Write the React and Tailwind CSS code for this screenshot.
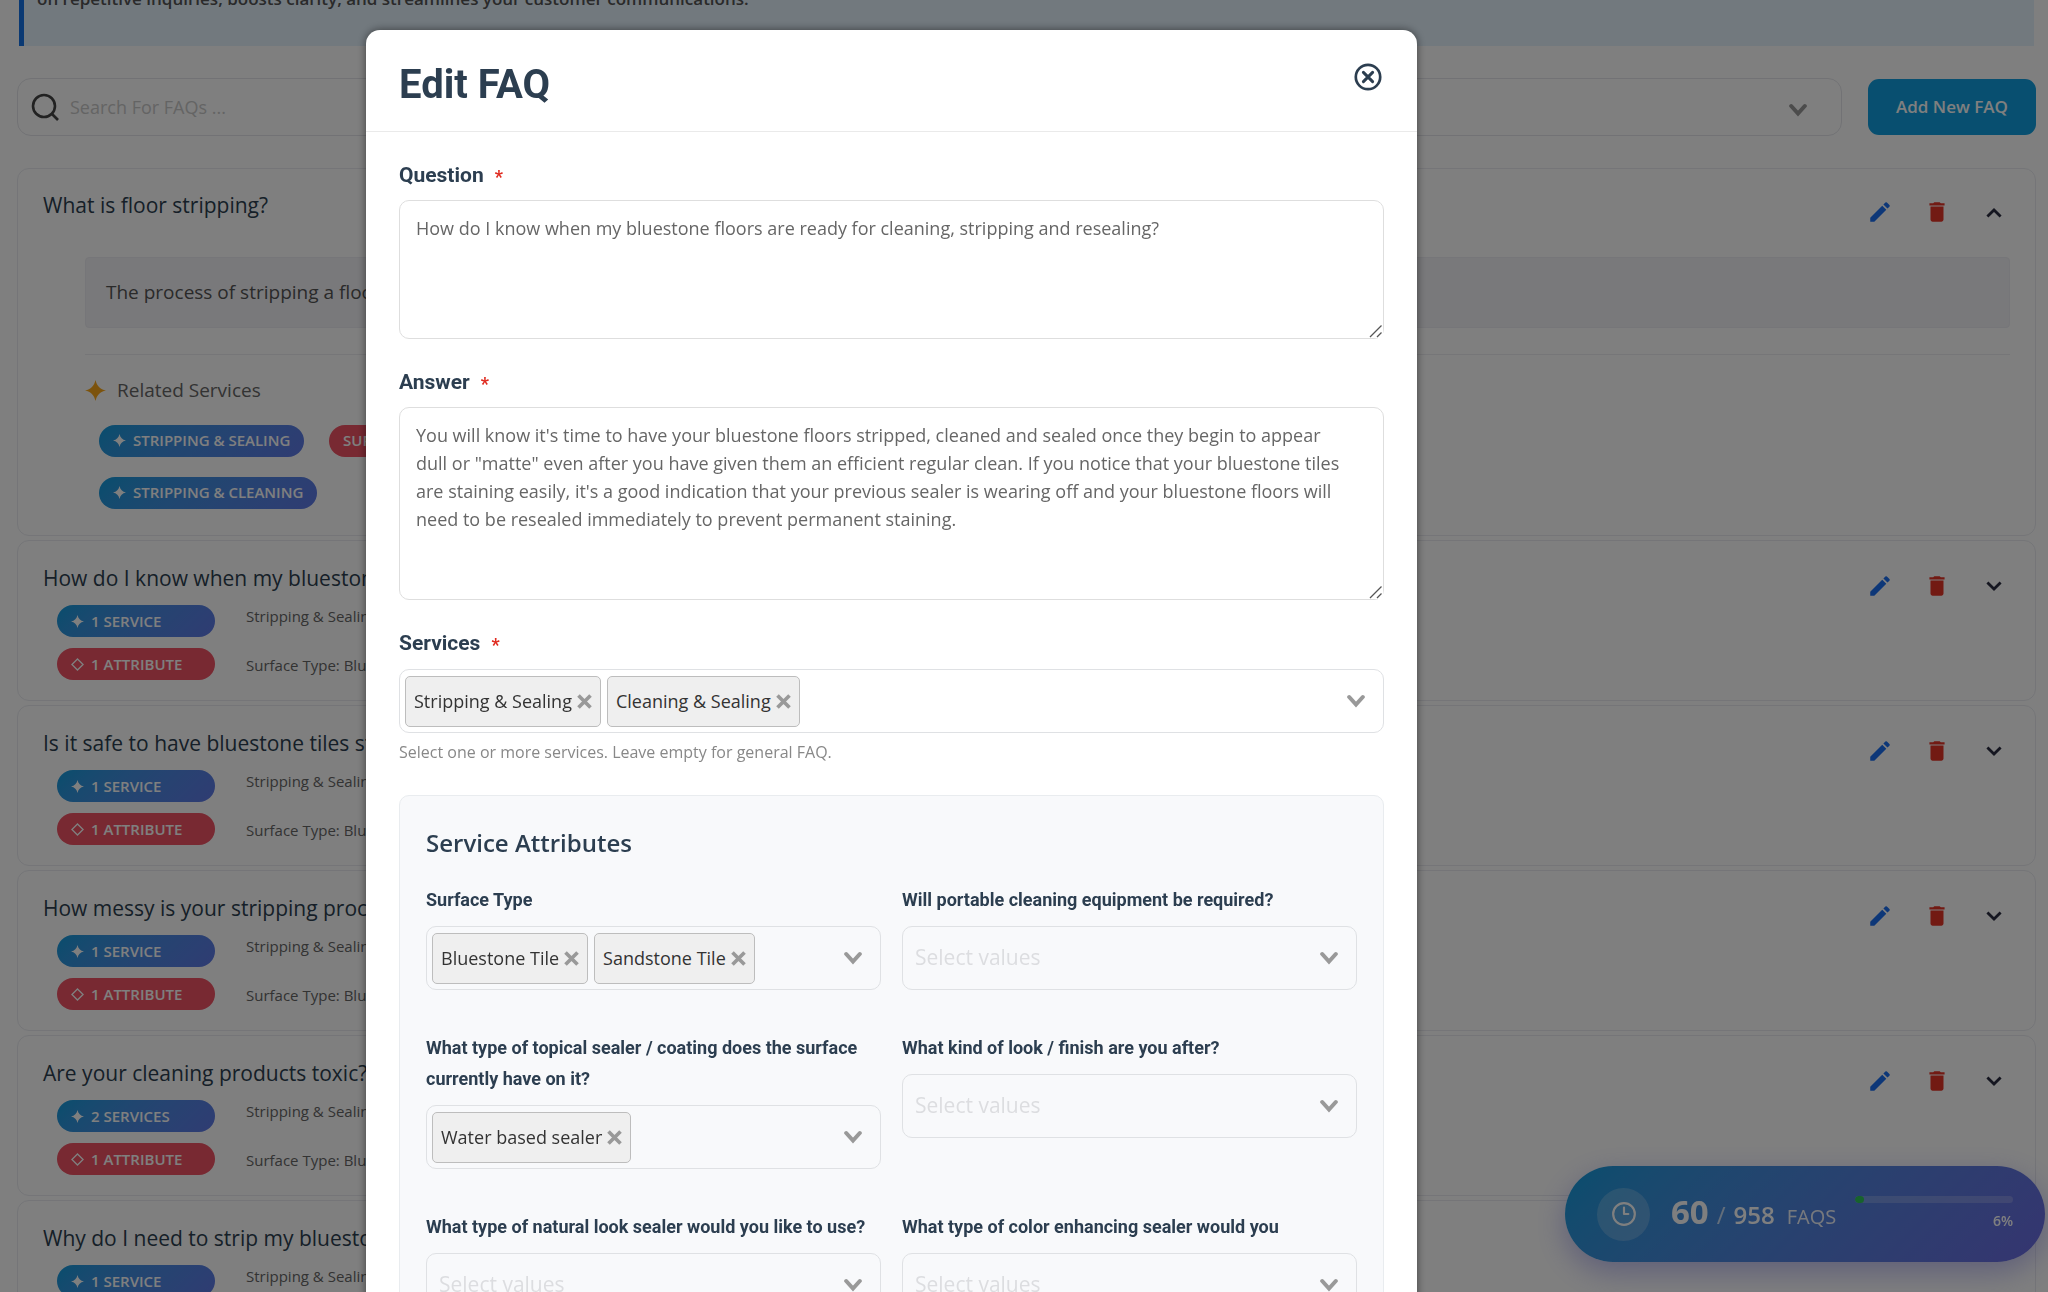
import React, { useState } from "react";
import { Clock3 } from "lucide-react";
import { MdEdit, MdDelete } from "react-icons/md";

const FAQS = [
  { question: "How do I know when my bluestone floors are ready?", services: "1 Service" },
  { question: "Is it safe to have bluestone tiles stripped and resealed?", services: "1 Service" },
  { question: "How messy is your stripping process?", services: "1 Service" },
  { question: "Are your cleaning products toxic?", services: "2 Services" },
  { question: "Why do I need to strip my bluestone floors?", services: "1 Service" },
];

const ATTRIBUTES = [
  { label: "Surface Type", values: ["Bluestone Tile", "Sandstone Tile"] },
  { label: "Will portable cleaning equipment be required?", values: [] },
  {
    label: "What type of topical sealer / coating does the surface currently have on it?",
    values: ["Water based sealer"],
  },
  { label: "What kind of look / finish are you after?", values: [] },
  { label: "What type of natural look sealer would you like to use?", values: [] },
  { label: "What type of color enhancing sealer would you", values: [] },
];

function Sparkle({ className }) {
  return (
    <svg viewBox="0 0 20 20" className={className} fill="currentColor" aria-hidden="true">
      <path d="M10 0 C11.2 5.6 14.4 8.8 20 10 C14.4 11.2 11.2 14.4 10 20 C8.8 14.4 5.6 11.2 0 10 C5.6 8.8 8.8 5.6 10 0Z" />
    </svg>
  );
}

function Diamond({ className }) {
  return (
    <svg viewBox="0 0 14 14" className={className} fill="none" stroke="currentColor" strokeWidth="1.4" aria-hidden="true">
      <path d="M7 1 L13 7 L7 13 L1 7Z" />
    </svg>
  );
}

// thick arrow used by every select box
function SelectArrow() {
  return (
    <svg viewBox="0 0 18 14" className="h-[14px] w-[18px] text-[#999999]" fill="none" stroke="currentColor" strokeWidth="4" strokeLinecap="round" aria-hidden="true">
      <path d="M2.2 3 L9 10.6 L15.8 3" />
    </svg>
  );
}

function Pill({ icon, tone, children }) {
  return (
    <span
      className={`flex h-8 items-center gap-[7px] whitespace-nowrap rounded-full px-[14px] text-[15px] font-semibold uppercase text-white ${
        tone === "red" ? "bg-[#f05365]" : "bg-linear-135 from-[#0b9bdc] to-[#5f78e6]"
      }`}
    >
      {icon}
      {children}
    </span>
  );
}

function CardActions({ open }) {
  return (
    <div className="flex items-center gap-[31px] pr-7">
      <button aria-label="Edit" className="text-[#1a6ef0]"><MdEdit className="size-[26px]" /></button>
      <button aria-label="Delete" className="text-[#e53427]"><MdDelete className="size-[26px]" /></button>
      <button aria-label={open ? "Collapse" : "Expand"} className="text-[#2a2d40]">
        <svg viewBox="0 0 26 26" className="size-[26px]" fill="none" stroke="currentColor" strokeWidth="2.8">
          <path d={open ? "M6.4 17.6 L13 11 L19.6 17.6" : "M6.4 9.4 L13 16 L19.6 9.4"} />
        </svg>
      </button>
    </div>
  );
}

function FaqCard({ faq }) {
  return (
    <article className="flex h-[161px] items-start justify-between rounded-xl border border-[#eaebf0] bg-white pl-[25px] pt-[21px]">
      <div>
        <h3 className="text-[21px] leading-8 text-[#2c3e50]">{faq.question}</h3>
        <div className="flex gap-[31px] pl-[14px] pt-[11px]">
          <div className="flex w-[158px] flex-col gap-[11px]">
            <Pill icon={<Sparkle className="size-[13px]" />}>{faq.services}</Pill>
            <Pill tone="red" icon={<Diamond className="size-[13px]" />}>1 Attribute</Pill>
          </div>
          <div className="flex flex-col gap-[27px] text-[15px] leading-[22px] text-[#666666]">
            <span>Stripping &amp; Sealing</span>
            <span>Surface Type: Bluestone Tile</span>
          </div>
        </div>
      </div>
      <div className="pt-[11px]">
        <CardActions />
      </div>
    </article>
  );
}

function MultiSelect({ id, values, placeholder = "Select values" }) {
  const [picked, setPicked] = useState(values);

  return (
    <div className="flex h-16 items-center rounded-[10px] border border-[#dfe1e4] pl-[5px] pr-[18px]">
      <div className="flex flex-1 items-center gap-[6px]">
        {picked.map(value => (
          <span key={value} className="flex h-[51px] items-center gap-[5px] rounded-[5px] border border-[#bdbdbd] bg-[#efefef] px-2 text-lg text-[#333333]">
            {value}
            <button type="button" aria-label={`Remove ${value}`} onClick={() => setPicked(picked.filter(v => v !== value))}>
              <svg viewBox="0 0 14 14" className="size-[15px] text-[#999999]" stroke="currentColor" strokeWidth="3.4">
                <path d="M1.4 1.4 L12.6 12.6 M12.6 1.4 L1.4 12.6" />
              </svg>
            </button>
          </span>
        ))}
        <input
          id={id}
          className="w-0 flex-1 bg-transparent px-[7px] text-[21px] text-[#333333] outline-none placeholder:text-[#dcdde0]"
          placeholder={picked.length ? "" : placeholder}
        />
      </div>
      <SelectArrow />
    </div>
  );
}

function FieldLabel({ htmlFor, children }) {
  return (
    <label htmlFor={htmlFor} className="flex items-center gap-[11px] font-[Roboto,sans-serif] text-[21px] font-bold leading-8 text-[#2c3e50]">
      {children}
      <span className="pt-1 text-lg text-[#e02b20]">*</span>
    </label>
  );
}

function TextArea({ id, rows, defaultValue }) {
  return (
    <div className="relative mt-[9px]">
      <textarea
        id={id}
        className={`block w-full rounded-[10px] border border-[#dedede] py-[13px] pl-4 pr-8 text-lg leading-7 text-[#666666] ${
          rows === "short" ? "h-[139px]" : "h-[193px]"
        }`}
        defaultValue={defaultValue}
      />
      {/* resize grip */}
      <svg viewBox="0 0 14 14" className="pointer-events-none absolute bottom-[1px] right-[1px] size-[14px] bg-white" stroke="#555555" strokeWidth="1.3" aria-hidden="true">
        <path d="M1 13 L12.5 1.5 M8 13 L12.5 8.5" />
      </svg>
    </div>
  );
}

function EditFaqModal() {
  return (
    <div role="dialog" aria-labelledby="modal-title" className="w-[1051px] overflow-hidden rounded-t-[14px] bg-white shadow-[0_0_8px_rgba(0,0,0,0.5)]">
      <header className="flex h-[102px] items-start justify-between border-b border-[#eaeaea] px-[33px] pt-[31px]">
        <h2 id="modal-title" className="font-[Roboto,sans-serif] text-[40px] font-bold leading-[48px] text-[#2c3e50]">Edit FAQ</h2>
        <button aria-label="Close" className="pr-[2px] pt-[2px] text-[#2c3e50]">
          <svg viewBox="0 0 28 28" className="size-7" fill="none" stroke="currentColor" strokeWidth="3" strokeLinecap="round">
            <circle cx="14" cy="14" r="12.2" strokeWidth="2.7" />
            <path d="M9.4 9.4 L18.6 18.6 M18.6 9.4 L9.4 18.6" />
          </svg>
        </button>
      </header>

      <form className="px-[33px] pt-[27px]">
        <FieldLabel htmlFor="question">Question</FieldLabel>
        <TextArea
          id="question"
          rows="short"
          defaultValue="How do I know when my bluestone floors are ready for cleaning, stripping and resealing?"
        />

        <div className="pt-[27px]">
          <FieldLabel htmlFor="answer">Answer</FieldLabel>
          <TextArea
            id="answer"
            rows="tall"
            defaultValue={`You will know it's time to have your bluestone floors stripped, cleaned and sealed once they begin to appear dull or "matte" even after you have given them an efficient regular clean. If you notice that your bluestone tiles are staining easily, it's a good indication that your previous sealer is wearing off and your bluestone floors will need to be resealed immediately to prevent permanent staining.`}
          />
        </div>

        <div className="pt-[27px]">
          <FieldLabel htmlFor="services">Services</FieldLabel>
          <div className="pt-[10px]">
            <MultiSelect id="services" values={["Stripping & Sealing", "Cleaning & Sealing"]} />
          </div>
          <p className="pt-[7px] text-base text-[#888888]">Select one or more services. Leave empty for general FAQ.</p>
        </div>

        <section className="mt-[31px] rounded-[10px] border border-[#e9ecef] bg-[#f8f9fb] px-[26px] pt-[31px] pb-10">
          <h3 className="text-2xl font-semibold text-[#2c3e50]">Service Attributes</h3>
          <div className="grid grid-cols-2 gap-x-[21px] gap-y-[42px] pt-[25px]">
            {ATTRIBUTES.map((attr, i) => (
              <div key={attr.label} className="flex flex-col gap-[11px]">
                <label htmlFor={`attr-${i}`} className="font-[Roboto,sans-serif] text-lg font-bold leading-[31px] text-[#2c3e50]">
                  {attr.label}
                </label>
                <MultiSelect id={`attr-${i}`} values={attr.values} />
              </div>
            ))}
          </div>
        </section>
      </form>
    </div>
  );
}

function UsageBadge({ used, total }) {
  const percent = Math.round((used / total) * 100);
  return (
    <div className="fixed bottom-[30px] right-[3px] flex h-24 w-[480px] items-center rounded-full bg-linear-135 from-[#0b9bdc] to-[#6a6ae0] px-8 text-white shadow-[0_10px_30px_rgba(90,90,220,0.4)]">
      <span className="flex size-[53px] items-center justify-center rounded-full bg-white/20">
        <Clock3 className="size-[26px]" />
      </span>
      <p className="flex flex-1 items-baseline pb-1 pl-[21px]">
        <span className="text-[33px] font-bold">{used}</span>
        <span className="px-2 text-2xl opacity-70">/</span>
        <span className="text-2xl font-semibold">{total}</span>
        <span className="pl-3 text-xl opacity-90">FAQS</span>
      </p>
      <div className="flex w-[158px] flex-col items-end gap-2 pb-[2px]">
        <div className="h-[7px] w-full overflow-hidden rounded-full bg-white/20">
          <div className="h-full rounded-full bg-[#2fc45a]" style={{ width: `${percent}%` }} />
        </div>
        <span className="text-sm font-semibold">{percent}%</span>
      </div>
    </div>
  );
}

export default function App() {
  return (
    <div className="h-screen overflow-hidden bg-white font-['Open_Sans',sans-serif]">
      <main className="pl-[17px] pr-3">
        <div className="mx-[2px] flex h-[46px] items-start border-l-[5px] border-[#1473e6] bg-[#e4f2fd] pl-[13px]">
          <p className="-mt-[15px] text-[17px] leading-7 font-semibold text-[#555555]">
            on repetitive inquiries, boosts clarity, and streamlines your customer communications.
          </p>
        </div>

        <div className="flex items-center gap-[26px] pt-8">
          <div className="flex h-[58px] flex-1 items-center rounded-[14px] border border-[#e4e5ea] pl-[13px] pr-[34px]">
            <svg viewBox="0 0 28 28" className="size-7 text-[#444444]" fill="none" stroke="currentColor" strokeWidth="2.6" aria-hidden="true">
              <circle cx="13" cy="13" r="11" />
              <path d="M21 21 L27 27" />
            </svg>
            <input aria-label="Search FAQs" className="flex-1 px-[11px] text-lg outline-none placeholder:text-[#c9c9c9]" placeholder="Search For FAQs ..." />
            <div className="pt-[6px]">
              <SelectArrow />
            </div>
          </div>
          <button className="h-14 w-[168px] rounded-[11px] bg-[#109fe0] text-[17px] font-semibold text-white">Add New FAQ</button>
        </div>

        <div className="flex flex-col gap-1 pt-8">
          <article className="h-[368px] rounded-xl border border-[#eaebf0] bg-white">
            <div className="flex items-start justify-between pl-[25px] pt-5">
              <h3 className="text-[21px] leading-8 text-[#2c3e50]">What is floor stripping?</h3>
              <div className="pt-[10px]">
                <CardActions open />
              </div>
            </div>
            <div className="pl-[67px] pr-[25px] pt-8">
              <p className="flex h-[71px] items-center rounded border border-[#ececf2] bg-[#f2f2f6] pl-5 text-[19px] text-[#555555]">
                The process of stripping a floor
              </p>
              <hr className="mt-[26px] border-[#ececf0]" />
              <h4 className="flex items-center gap-[11px] pt-[21px] text-[19px] text-[#666666]">
                <Sparkle className="size-[21px] text-[#f9a71a]" />
                Related Services
              </h4>
              <div className="flex items-start gap-3 pl-[14px] pt-[20px]">
                <div className="flex w-[218px] flex-col items-start gap-5">
                  <Pill icon={<Sparkle className="size-[13px]" />}>Stripping &amp; Sealing</Pill>
                  <Pill icon={<Sparkle className="size-[13px]" />}>Stripping &amp; Cleaning</Pill>
                </div>
                <Pill tone="red">Surface Type</Pill>
              </div>
            </div>
          </article>
          {FAQS.map(faq => (
            <FaqCard key={faq.question} faq={faq} />
          ))}
        </div>
      </main>

      <UsageBadge used={60} total={958} />

      <div className="fixed inset-0 flex items-start justify-center overflow-hidden bg-black/50 pr-[265px] pt-[30px]">
        <EditFaqModal />
      </div>
    </div>
  );
}
